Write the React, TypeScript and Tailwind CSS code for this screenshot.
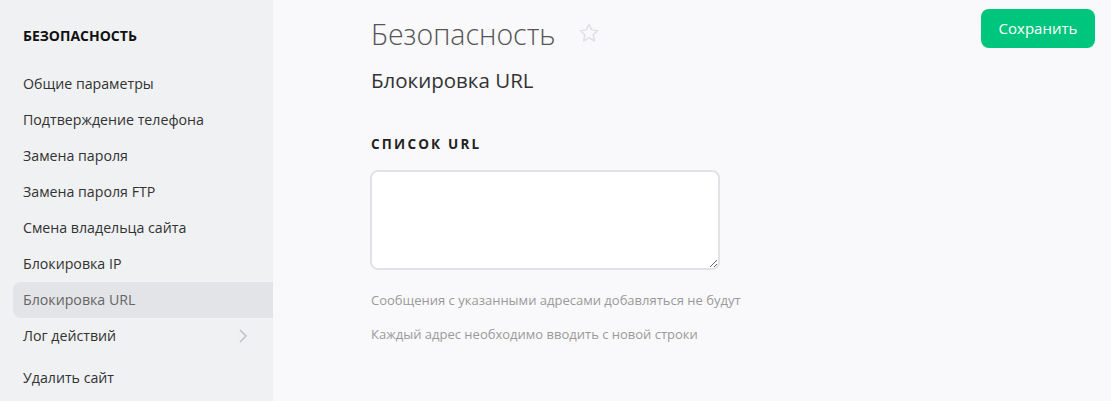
import React from "react";

const items = [
  "Общие параметры",
  "Подтверждение телефона",
  "Замена пароля",
  "Замена пароля FTP",
  "Смена владельца сайта",
  "Блокировка IP",
  "Блокировка URL",
  "Лог действий",
];

export default function App() {
  return (
    <div className="flex h-[401px] w-[1111px] overflow-hidden bg-[#f9f9fb] text-[#333]" style={{ fontFamily: '"Open Sans", "Noto Sans", sans-serif' }}>
      <aside className="w-[273px] shrink-0 bg-[#eff1f2] pl-[13px] pt-[26px]">
        <div className="pl-[10px] text-[14px] font-bold leading-[20px] text-[#111]">БЕЗОПАСНОСТЬ</div>
        <nav className="mt-[20px] flex flex-col">
          {items.map((t, i) => {
            const active = t === "Блокировка URL";
            return (
              <div
                key={t}
                className={`flex h-[36px] items-center justify-between rounded-l-[8px] pl-[10px] pr-[26px] text-[14.2px] ${active ? "bg-[#e3e4e7] text-[#666]" : "text-[#333]"}`}
              >
                <span>{t}</span>
                {i === 7 && (
                  <svg width="8" height="14" viewBox="0 0 8 14" fill="none" stroke="#b8bcc2" strokeWidth="1.3">
                    <path d="M1 1l6 6-6 6" />
                  </svg>
                )}
              </div>
            );
          })}
          <div className="mt-[6px] flex h-[36px] items-center pl-[10px] text-[14.2px] text-[#333]">Удалить сайт</div>
        </nav>
      </aside>
      <main className="relative flex-1 pl-[98px] pt-[14px]">
        <div className="flex items-center">
          <h1 className="text-[28.5px] font-light leading-[40px] text-[#555]">Безопасность</h1>
          <svg className="ml-[22px] mt-[-2px]" width="22" height="22" viewBox="0 0 24 24" fill="none" stroke="#dde0e4" strokeWidth="1.6" strokeLinejoin="round">
            <path d="M12 2.5l2.9 6.1 6.6.8-4.9 4.6 1.3 6.6L12 17.3l-5.9 3.3 1.3-6.6-4.9-4.6 6.6-.8z" />
          </svg>
        </div>
        <div className="mt-[12px] text-[20.5px] leading-[28px] text-[#333]">Блокировка URL</div>
        <div className="mt-[40px] text-[13.5px] font-bold uppercase leading-[20px] tracking-[2.2px] text-[#222]">Список URL</div>
        <textarea className="mt-[16px] block h-[100px] w-[350px] rounded-[8px] border-2 border-[#e2e2e6] bg-white ml-[-1px]" />
        <div className="mt-[21px] text-[13px] leading-[18px] text-[#999]">Сообщения с указанными адресами добавляться не будут</div>
        <div className="mt-[16px] text-[13px] leading-[18px] text-[#999]">Каждый адрес необходимо вводить с новой строки</div>
        <button className="absolute right-[16px] top-[9px] h-[39px] w-[114px] rounded-[8px] bg-[#00c57c] text-[15px] text-white">Сохранить</button>
      </main>
    </div>
  );
}
